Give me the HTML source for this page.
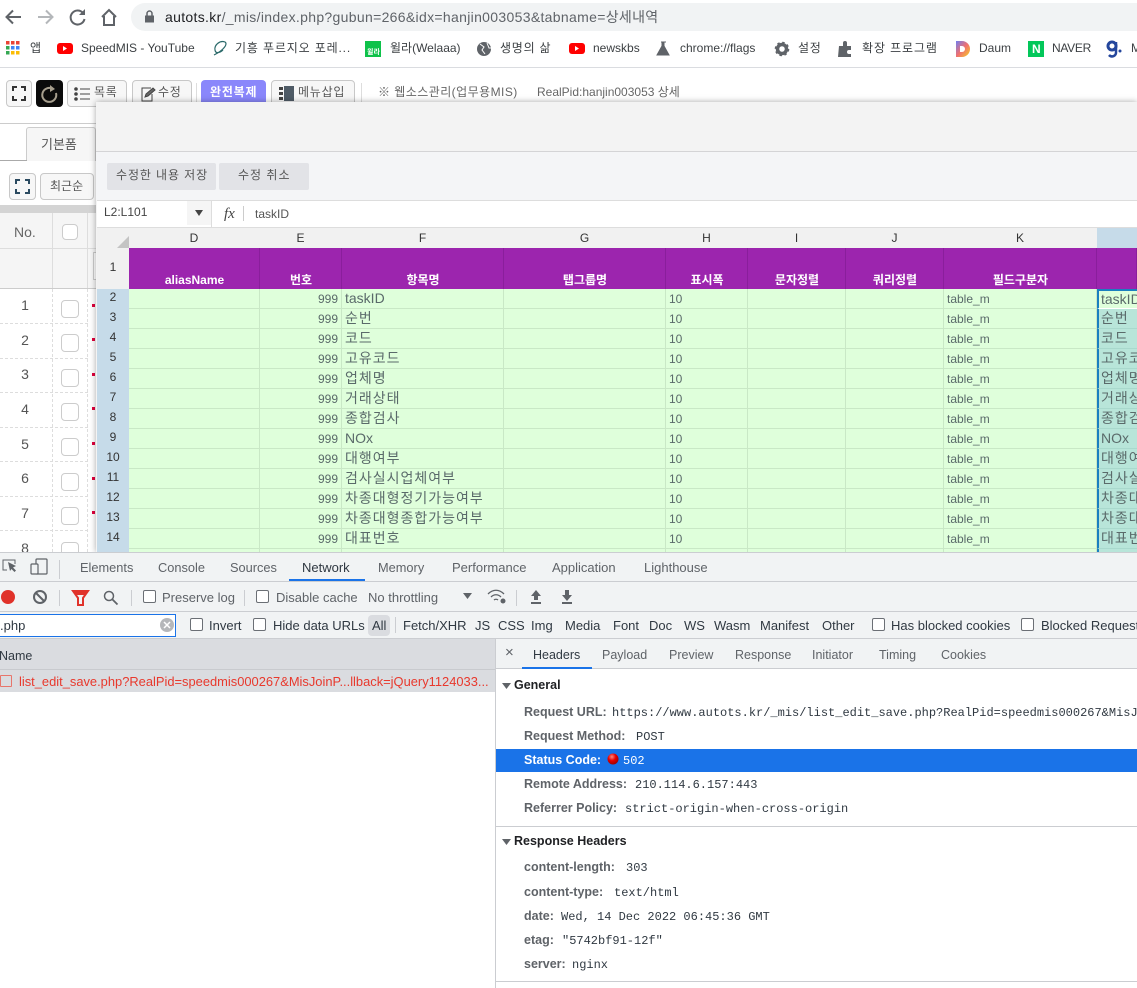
<!DOCTYPE html>
<html><head><meta charset="utf-8"><style>
*{box-sizing:border-box}
html,body{margin:0;padding:0;width:1137px;height:988px;overflow:hidden;background:#fff}
body{position:relative;font:12px "Liberation Sans","Noto Sans CJK KR",sans-serif;color:#333}
.a{position:absolute}
.t{position:absolute;white-space:nowrap;line-height:16px;height:16px}
.bm{font-size:12px;color:#3c4043;top:40px}
.ko{letter-spacing:.75px}
.tb{font-size:12px;color:#555;top:84px}
.btn{position:absolute;border:1px solid #c8c8c8;border-radius:4px;background:#f7f7f7}
svg{position:absolute;overflow:visible}
table{position:absolute;left:97px;top:228px;border-collapse:separate;border-spacing:0;table-layout:fixed;width:1040px}
td{padding:1px 0 0;overflow:hidden;white-space:nowrap;vertical-align:top;border-right:1px solid #c9e8c6;border-bottom:1px solid #c9e8c6;background:#dfffdb;color:#5a6a6a;font-size:12px;height:20px;line-height:18px}
tr.h td{height:20px;padding:0 1px 0 0;background:#f1f1f1;color:#333;text-align:center;border:0;line-height:20px}
tr.p td{height:41px;padding:0 0 0 1px;background:#9c25ae;border-right:1px solid #8a1e9c;border-bottom:0;color:#fff;font-weight:bold;text-align:center;vertical-align:bottom;line-height:17px}
td.r{padding:0;background:#c6dbe9;color:#333;text-align:center;border:0;line-height:17px}
tr.p td.r{padding:0 0 3px;background:#f1f1f1;color:#333;font-weight:normal;border:0;vertical-align:middle;line-height:20px}
td.n{text-align:right;padding-right:3px}
td.m{padding-left:3px}
td.k{padding:0 0 0 3px;font-size:14px;letter-spacing:1px;line-height:19px}
td.l{padding:0 0 0 2px;background:#b8e5d9;font-size:14px;letter-spacing:1px;line-height:19px;border:0;border-left:2px solid #1a7fc0;border-bottom:1px solid #a9d9cd}
.d{font-size:13px;color:#303942;top:0}
.cb{position:absolute;width:13px;height:13px;border:1px solid #6b6f75;border-radius:2px;background:#fff}
.cl{position:absolute;width:18px;height:18px;border:1px solid #ccc;border-radius:4px;background:#fff;left:61px}
.lab{font-weight:bold;font-size:12.5px;color:#5f6368}
.val{font:12px "Liberation Mono",monospace;color:#303942;line-height:16px}
.ln{position:absolute;background:#cbcdd1}
.num{left:0;width:50px;text-align:center;font-size:14px;color:#555}
.dot{position:absolute;left:92px;width:3px;height:3px;background:#e0003c}
</style></head><body>

<!-- Browser chrome -->
<div class="a" style="left:131px;top:3px;width:1006px;height:28px;border-radius:14px 0 0 14px;background:#f1f3f4"></div>
<svg style="left:0;top:0" width="125" height="32" fill="none">
<path d="M21 17H7M13 10.500L6.500 17l6.500 6.500" stroke="#5f6368" stroke-width="2"/>
<path d="M38 17h14M46 10.500l6.500 6.500-6.500 6.500" stroke="#b4b7ba" stroke-width="2"/>
<path d="M83 13a7 7 0 1 0 1.500 6" stroke="#5f6368" stroke-width="2"/><path d="M85 9v6h-6z" fill="#5f6368"/>
<path d="M102 17l7-7 7 7M104 16v9h10v-9" stroke="#5f6368" stroke-width="2"/>
<path d="M145 15.500h9v7h-9z" fill="#5f6368"/><path d="M147 15.500v-2a2.500 2.500 0 0 1 5 0v2" stroke="#5f6368" stroke-width="1.500"/>
</svg>
<div class="t" style="left:165px;top:9px;font-size:14px;color:#5f6368;letter-spacing:.32px"><span style="color:#202124">autots.kr</span>/_mis/index.php?gubun=266&amp;idx=hanjin003053&amp;tabname=상세내역</div>

<!-- Bookmarks -->
<svg style="left:0;top:36px" width="1137" height="28">
<g><rect x="6" y="5" width="3.500" height="3.500" fill="#ea4335"/><rect x="11" y="5" width="3.500" height="3.500" fill="#ea4335"/><rect x="16" y="5" width="3.500" height="3.500" fill="#ea4335"/><rect x="6" y="10" width="3.500" height="3.500" fill="#34a853"/><rect x="11" y="10" width="3.500" height="3.500" fill="#4285f4"/><rect x="16" y="10" width="3.500" height="3.500" fill="#4285f4"/><rect x="6" y="15" width="3.500" height="3.500" fill="#34a853"/><rect x="11" y="15" width="3.500" height="3.500" fill="#fbbc05"/><rect x="16" y="15" width="3.500" height="3.500" fill="#fbbc05"/></g>
<rect x="57" y="7" width="16" height="11" rx="3" fill="#f00"/><path d="M63 10l4 2.500-4 2.500z" fill="#fff"/>
<path d="M214 19C224 14 228 8 225 6c-5-2-11 3-10 8 .5 4 5 3 8 0" fill="none" stroke="#2b6a6a" stroke-width="1.200"/>
<rect x="365" y="5" width="16" height="16" fill="#0ec24a"/>
<circle cx="484" cy="13" r="7" fill="#5f6368"/><path d="M480 8l4 3-2 3 3 4M487 7l2 5 2 0" stroke="#fff" fill="none"/>
<rect x="569" y="7" width="16" height="11" rx="3" fill="#f00"/><path d="M575 10l4 2.500-4 2.500z" fill="#fff"/>
<path d="M661 6h5M662 6v4l-5 9h12l-5-9V6z" fill="#5f6368" stroke="#5f6368"/>
<circle cx="782" cy="13" r="4.500" fill="none" stroke="#5f6368" stroke-width="3.500"/><circle cx="782" cy="13" r="6.500" fill="none" stroke="#5f6368" stroke-width="1.600" stroke-dasharray="2.500 2.600"/>
<path d="M839 10h4v-3a2 2 0 0 1 4 0v3h4v4h-2a2 2 0 0 0 0 4h2v3h-13z" fill="#5f6368"/>
<defs><linearGradient id="dg" x1="0" y1="0" x2="1" y2="1"><stop offset="0" stop-color="#6f7ff0"/><stop offset=".5" stop-color="#f07070"/><stop offset="1" stop-color="#f5d020"/></linearGradient></defs>
<path d="M956 5h6a8 8 0 0 1 0 16h-6z" fill="url(#dg)"/><path d="M960 10h2a3 3 0 0 1 0 6h-2z" fill="#fff"/>
<rect x="1028" y="5" width="16" height="16" fill="#03c75a"/>
<circle cx="1112" cy="10" r="4" fill="none" stroke="#24469c" stroke-width="3"/><path d="M1116 6v10a4 4 0 0 1-7 3" fill="none" stroke="#24469c" stroke-width="2.500"/><circle cx="1120" cy="15" r="1.500" fill="#24469c"/>
</svg>
<div class="t" style="left:367px;top:45px;color:#fff;font-size:7px;font-weight:bold">윌라</div>
<div class="t" style="left:1032px;top:41px;color:#fff;font-size:12px;font-weight:bold">N</div>
<div class="t bm" style="left:30px">앱</div>
<div class="t bm" style="left:81px">SpeedMIS - YouTube</div>
<div class="t bm ko" style="left:235px;letter-spacing:.85px">기흥 푸르지오 포레...</div>
<div class="t bm" style="left:390px">윌라(Welaaa)</div>
<div class="t bm ko" style="left:500px">생명의 삶</div>
<div class="t bm" style="left:593px">newskbs</div>
<div class="t bm" style="left:680px">chrome://flags</div>
<div class="t bm ko" style="left:798px">설정</div>
<div class="t bm ko" style="left:862px;letter-spacing:.9px">확장 프로그램</div>
<div class="t bm" style="left:979px">Daum</div>
<div class="t bm" style="left:1052px;letter-spacing:-.3px">NAVER</div>
<div class="t bm" style="left:1131px">M</div>
<div class="a" style="left:0;top:67px;width:1137px;height:1px;background:#dadce0"></div>

<!-- Page toolbar -->
<div class="btn" style="left:6px;top:80px;width:26px;height:27px"></div>
<svg style="left:6px;top:80px" width="26" height="27" fill="none"><path d="M7 11V7h4M15 7h4v4M19 16v4h-4M11 20H7v-4" stroke="#333" stroke-width="2"/></svg>
<div class="a" style="left:36px;top:80px;width:27px;height:27px;background:#0b0b0b;border-radius:4px"></div>
<svg style="left:36px;top:80px" width="27" height="27" fill="none"><path d="M17 9a7 7 0 1 0 3 4" stroke="#a79f8e" stroke-width="2"/><path d="M14 5l5 4-5 3z" fill="#a79f8e"/></svg>
<div class="btn" style="left:67px;top:80px;width:60px;height:27px"></div>
<svg style="left:74px;top:86px" width="18" height="16"><g fill="#444"><circle cx="2" cy="3" r="1.800"/><circle cx="2" cy="8" r="1.800"/><circle cx="2" cy="13" r="1.800"/><rect x="6" y="2.500" width="10" height="1"/><rect x="6" y="7.500" width="10" height="1"/><rect x="6" y="12.500" width="10" height="1"/></g></svg>
<div class="t tb ko" style="left:94px">목록</div>
<div class="btn" style="left:132px;top:80px;width:60px;height:27px"></div>
<svg style="left:140px;top:86px" width="17" height="17" fill="none" stroke="#444"><path d="M11 2H2v13h10V8"/><path d="M5 11l1-3 7-6 2 2-7 6z" fill="#666"/></svg>
<div class="t tb ko" style="left:158px">수정</div>
<div class="a" style="left:196px;top:83px;width:1px;height:22px;background:#ddd"></div>
<div class="a" style="left:201px;top:80px;width:65px;height:27px;background:#8a87fb;border-radius:4px 4px 0 0"></div>
<div class="t" style="left:210px;top:84px;color:#fff;font-weight:bold;letter-spacing:.8px">완전복제</div>
<div class="btn" style="left:271px;top:80px;width:84px;height:27px"></div>
<svg style="left:279px;top:85px" width="18" height="18"><g fill="#444"><rect x="0" y="2" width="4" height="3"/><rect x="0" y="7" width="4" height="3"/><rect x="0" y="12" width="4" height="3"/><rect x="5" y="1" width="10" height="15" fill="#4f5b66"/></g></svg>
<div class="t tb ko" style="left:298px">메뉴삽입</div>
<div class="a" style="left:361px;top:83px;width:1px;height:22px;background:#ddd"></div>
<div class="t tb" style="left:378px;color:#666;letter-spacing:.45px">※ 웹소스관리(업무용MIS)</div>
<div class="t tb" style="left:537px;color:#666">RealPid:hanjin003053 상세</div>

<!-- Left page behind modal -->
<div class="a" style="left:0;top:123px;width:96px;height:1px;background:#ccc"></div>
<div class="a" style="left:26px;top:127px;width:70px;height:34px;background:#f6f6f6;border:1px solid #ccc;border-bottom:0;border-radius:3px 3px 0 0"></div>
<div class="t" style="left:41px;top:137px;font-size:13px;color:#555">기본폼</div>
<div class="a" style="left:0;top:160px;width:27px;height:1px;background:#aaa"></div>
<div class="btn" style="left:9px;top:173px;width:27px;height:27px"></div>
<svg style="left:9px;top:173px" width="27" height="27" fill="none"><path d="M7 11V7h4M16 7h4v4M20 16v4h-4M11 20H7v-4" stroke="#2b4a60" stroke-width="2"/></svg>
<div class="btn" style="left:40px;top:173px;width:54px;height:27px"></div>
<div class="t" style="left:50px;top:178px;color:#555">최근순</div>
<div class="a" style="left:0;top:205px;width:96px;height:8px;background:#d4d4d4"></div>
<div class="a" style="left:0;top:213px;width:96px;height:75px;background:#f5f5f5"></div>
<div class="a" style="left:0;top:248px;width:96px;height:1px;background:#ddd"></div>
<div class="a" style="left:0;top:288px;width:96px;height:1px;background:#ccc"></div>
<div class="a" style="left:52px;top:213px;width:1px;height:75px;background:#ddd"></div>
<div class="a" style="left:87px;top:213px;width:1px;height:75px;background:#ddd"></div>
<div class="t" style="left:14px;top:224px;font-size:14px;color:#666">No.</div>
<div class="cl" style="left:62px;top:224px;width:16px;height:16px"></div>
<div class="a" style="left:93px;top:252px;width:4px;height:28px;border:1px solid #ccc;background:#fff"></div>
<div class="a" style="left:0;top:289px;width:96px;height:263px;background:#fff"></div>
<div class="a" style="left:0;top:323px;width:88px;border-top:1px dashed #ddd"></div>
<div class="a" style="left:0;top:358px;width:88px;border-top:1px dashed #ddd"></div>
<div class="a" style="left:0;top:392px;width:88px;border-top:1px dashed #ddd"></div>
<div class="a" style="left:0;top:427px;width:88px;border-top:1px dashed #ddd"></div>
<div class="a" style="left:0;top:461px;width:88px;border-top:1px dashed #ddd"></div>
<div class="a" style="left:0;top:496px;width:88px;border-top:1px dashed #ddd"></div>
<div class="a" style="left:0;top:530px;width:88px;border-top:1px dashed #ddd"></div>
<div class="a" style="left:52px;top:289px;height:263px;border-left:1px dashed #ddd"></div>
<div class="a" style="left:87px;top:289px;height:263px;border-left:1px dashed #ddd"></div>
<div class="t num" style="top:297px">1</div><div class="cl" style="top:300px"></div><div class="dot" style="top:304px"></div>
<div class="t num" style="top:332px">2</div><div class="cl" style="top:334px"></div><div class="dot" style="top:338px"></div>
<div class="t num" style="top:366px">3</div><div class="cl" style="top:369px"></div><div class="dot" style="top:373px"></div>
<div class="t num" style="top:401px">4</div><div class="cl" style="top:403px"></div><div class="dot" style="top:407px"></div>
<div class="t num" style="top:436px">5</div><div class="cl" style="top:438px"></div><div class="dot" style="top:442px"></div>
<div class="t num" style="top:470px">6</div><div class="cl" style="top:473px"></div><div class="dot" style="top:477px"></div>
<div class="t num" style="top:505px">7</div><div class="cl" style="top:507px"></div><div class="dot" style="top:511px"></div>
<div class="t num" style="top:540px">8</div><div class="cl" style="top:542px"></div>

<!-- Modal -->
<div class="a" style="left:96px;top:102px;width:1041px;height:450px;background:#f3f3f3;box-shadow:0 0 6px rgba(0,0,0,.35)"></div>
<div class="a" style="left:96px;top:151px;width:1041px;height:1px;background:#d4d4d6"></div>
<div class="a" style="left:96px;top:152px;width:1041px;height:48px;background:#f4f5f7"></div>
<div class="a" style="left:107px;top:163px;width:109px;height:27px;background:#e2e3e7;border-radius:2px"></div>
<div class="t" style="left:116px;top:167px;color:#555;letter-spacing:.9px">수정한 내용 저장</div>
<div class="a" style="left:219px;top:163px;width:90px;height:27px;background:#e2e3e7;border-radius:2px"></div>
<div class="t" style="left:238px;top:167px;color:#555;letter-spacing:1px">수정 취소</div>
<div class="a" style="left:97px;top:200px;width:1040px;height:28px;background:#fff;border-top:1px solid #ddd;border-bottom:1px solid #ddd"></div>
<div class="t" style="left:104px;top:204px;color:#444">L2:L101</div>
<div class="a" style="left:187px;top:201px;width:24px;height:24px;background:#f5f5f5"></div>
<svg style="left:194px;top:209px" width="10" height="8"><path d="M1 1h8L5 7z" fill="#444"/></svg>
<div class="a" style="left:211px;top:201px;width:1px;height:26px;background:#ddd"></div>
<div class="t" style="left:224px;top:206px;font:italic 15px 'Liberation Serif',serif;color:#444">fx</div>
<div class="a" style="left:243px;top:206px;width:1px;height:15px;background:#ccc"></div>
<div class="t" style="left:255px;top:206px;color:#555">taskID</div>

<table>
<colgroup><col style="width:32px"><col style="width:131px"><col style="width:82px"><col style="width:162px"><col style="width:162px"><col style="width:82px"><col style="width:98px"><col style="width:98px"><col style="width:153px"><col style="width:40px"></colgroup>
<tr class="h"><td></td><td>D</td><td>E</td><td>F</td><td>G</td><td>H</td><td>I</td><td>J</td><td>K</td><td style="background:#c6dbe9"></td></tr>
<tr class="p"><td class="r">1</td><td>aliasName</td><td>번호</td><td>항목명</td><td>탭그룹명</td><td>표시폭</td><td>문자정렬</td><td>쿼리정렬</td><td>필드구분자</td><td></td></tr>
<tr><td class="r">2</td><td></td><td class="n">999</td><td class="k" style="letter-spacing:0">taskID</td><td></td><td class="m">10</td><td></td><td></td><td class="m">table_m</td><td class="l" style="background:#dfffdb;letter-spacing:0;border-top:2px solid #1a7fc0;border-bottom:1px solid #fff;line-height:17px">taskID</td></tr>
<tr><td class="r">3</td><td></td><td class="n">999</td><td class="k">순번</td><td></td><td class="m">10</td><td></td><td></td><td class="m">table_m</td><td class="l">순번</td></tr>
<tr><td class="r">4</td><td></td><td class="n">999</td><td class="k">코드</td><td></td><td class="m">10</td><td></td><td></td><td class="m">table_m</td><td class="l">코드</td></tr>
<tr><td class="r">5</td><td></td><td class="n">999</td><td class="k">고유코드</td><td></td><td class="m">10</td><td></td><td></td><td class="m">table_m</td><td class="l">고유코드</td></tr>
<tr><td class="r">6</td><td></td><td class="n">999</td><td class="k">업체명</td><td></td><td class="m">10</td><td></td><td></td><td class="m">table_m</td><td class="l">업체명</td></tr>
<tr><td class="r">7</td><td></td><td class="n">999</td><td class="k">거래상태</td><td></td><td class="m">10</td><td></td><td></td><td class="m">table_m</td><td class="l">거래상태</td></tr>
<tr><td class="r">8</td><td></td><td class="n">999</td><td class="k">종합검사</td><td></td><td class="m">10</td><td></td><td></td><td class="m">table_m</td><td class="l">종합검사</td></tr>
<tr><td class="r">9</td><td></td><td class="n">999</td><td class="k" style="letter-spacing:0">NOx</td><td></td><td class="m">10</td><td></td><td></td><td class="m">table_m</td><td class="l" style="letter-spacing:0">NOx</td></tr>
<tr><td class="r">10</td><td></td><td class="n">999</td><td class="k">대행여부</td><td></td><td class="m">10</td><td></td><td></td><td class="m">table_m</td><td class="l">대행여부</td></tr>
<tr><td class="r">11</td><td></td><td class="n">999</td><td class="k">검사실시업체여부</td><td></td><td class="m">10</td><td></td><td></td><td class="m">table_m</td><td class="l">검사실시</td></tr>
<tr><td class="r">12</td><td></td><td class="n">999</td><td class="k">차종대형정기가능여부</td><td></td><td class="m">10</td><td></td><td></td><td class="m">table_m</td><td class="l">차종대형</td></tr>
<tr><td class="r">13</td><td></td><td class="n">999</td><td class="k">차종대형종합가능여부</td><td></td><td class="m">10</td><td></td><td></td><td class="m">table_m</td><td class="l">차종대형</td></tr>
<tr><td class="r">14</td><td></td><td class="n">999</td><td class="k">대표번호</td><td></td><td class="m">10</td><td></td><td></td><td class="m">table_m</td><td class="l">대표번호</td></tr>
<tr><td class="r"></td><td></td><td></td><td></td><td></td><td></td><td></td><td></td><td></td><td class="l"></td></tr>
</table>
<svg style="left:117px;top:236px" width="12" height="12"><path d="M12 0v12H0z" fill="#c4c4c4"/></svg>

<!-- DevTools -->
<div class="a" style="left:0;top:552px;width:1137px;height:87px;background:#f1f3f4;border-top:1px solid #cbcdd1"></div>
<div class="ln" style="left:0;top:581px;width:1137px;height:1px"></div>
<div class="ln" style="left:0;top:611px;width:1137px;height:1px"></div>
<div class="ln" style="left:0;top:638px;width:1137px;height:1px"></div>
<svg style="left:0;top:552px" width="600" height="90" fill="none">
<path d="M7 18H3V8h12v4" stroke="#5f6368"/><path d="M8 10l8 4-3 1.500 3 3-1.500 1.500-3-3L10 19z" fill="#5f6368"/>
<rect x="36" y="7" width="11" height="15" rx="1" stroke="#5f6368" stroke-width="1.200"/><rect x="31" y="12" width="7" height="10" rx="1" fill="#f1f3f4" stroke="#5f6368" stroke-width="1.200"/>
<path d="M59.500 8v19" stroke="#cbcdd1"/>
<circle cx="8" cy="45" r="7" fill="#e0322a"/>
<circle cx="40" cy="45" r="6" stroke="#5f6368" stroke-width="2"/><path d="M36 41l8 8" stroke="#5f6368" stroke-width="2"/>
<path d="M59.500 38v16M131.500 38v16M244.500 38v16M516.500 38v16" stroke="#cbcdd1"/>
<path d="M73 39h15l-5 7v7h-5v-7z" stroke="#e0322a" stroke-width="2"/><path d="M74 40h13l-2 3H76z" fill="#e0322a"/>
<circle cx="109" cy="44" r="4.500" stroke="#5f6368" stroke-width="1.500"/><path d="M112.500 47.500l5 5" stroke="#5f6368" stroke-width="1.800"/>
<path d="M463 41h9l-4.500 6z" fill="#5f6368"/>
<path d="M488 42c5-5 11-5 16 0M491 45c3-3 7-3 10 0M494 48c1-1 3-1 4 0" stroke="#5f6368" stroke-width="1.300"/><circle cx="503" cy="49" r="2.500" fill="#5f6368"/>
<path d="M536 38l-5 6h3v4h4v-4h3zM531 50h10v2h-10z" fill="#5f6368"/>
<path d="M565 38h4v5h3l-5 6-5-6h3zM562 50h10v2h-10z" fill="#5f6368"/>
</svg>
<div class="a" style="left:289px;top:579px;width:76px;height:2px;background:#1a73e8"></div>
<div class="t d" style="left:80px;top:560px;color:#5f6368;font-size:12.800px">Elements</div>
<div class="t d" style="left:158px;top:560px;color:#5f6368;font-size:12.800px">Console</div>
<div class="t d" style="left:230px;top:560px;color:#5f6368;font-size:12.800px">Sources</div>
<div class="t d" style="left:302px;top:560px">Network</div>
<div class="t d" style="left:378px;top:560px;color:#5f6368;font-size:12.800px">Memory</div>
<div class="t d" style="left:452px;top:560px;color:#5f6368">Performance</div>
<div class="t d" style="left:552px;top:560px;color:#5f6368">Application</div>
<div class="t d" style="left:644px;top:560px;color:#5f6368">Lighthouse</div>
<div class="cb" style="left:143px;top:590px"></div>
<div class="t d" style="left:162px;top:590px;color:#5f6368">Preserve log</div>
<div class="cb" style="left:256px;top:590px"></div>
<div class="t d" style="left:276px;top:590px;color:#5f6368">Disable cache</div>
<div class="t d" style="left:368px;top:590px;color:#5f6368">No throttling</div>

<div class="a" style="left:-2px;top:614px;width:178px;height:23px;background:#fff;border:1px solid #1a73e8"></div>
<div class="t d" style="left:0;top:618px;font-size:13px">.php</div>
<svg style="left:160px;top:618px" width="15" height="15"><circle cx="7" cy="7" r="7" fill="#b5b7ba"/><path d="M4 4l6 6M10 4l-6 6" stroke="#fff" stroke-width="1.500"/></svg>
<div class="cb" style="left:190px;top:618px"></div>
<div class="t d" style="left:209px;top:618px">Invert</div>
<div class="cb" style="left:253px;top:618px"></div>
<div class="t d" style="left:273px;top:618px">Hide data URLs</div>
<div class="a" style="left:368px;top:615px;width:22px;height:21px;background:#dadce0;border-radius:4px"></div>
<div class="t d" style="left:372px;top:618px">All</div>
<div class="a" style="left:395px;top:617px;width:1px;height:16px;background:#cbcdd1"></div>
<div class="t d" style="left:403px;top:618px">Fetch/XHR</div>
<div class="t d" style="left:475px;top:618px">JS</div>
<div class="t d" style="left:498px;top:618px">CSS</div>
<div class="t d" style="left:531px;top:618px">Img</div>
<div class="t d" style="left:565px;top:618px">Media</div>
<div class="t d" style="left:613px;top:618px">Font</div>
<div class="t d" style="left:649px;top:618px">Doc</div>
<div class="t d" style="left:684px;top:618px">WS</div>
<div class="t d" style="left:714px;top:618px">Wasm</div>
<div class="t d" style="left:760px;top:618px">Manifest</div>
<div class="t d" style="left:822px;top:618px">Other</div>
<div class="cb" style="left:872px;top:618px"></div>
<div class="t d" style="left:891px;top:618px">Has blocked cookies</div>
<div class="cb" style="left:1021px;top:618px"></div>
<div class="t d" style="left:1041px;top:618px">Blocked Requests</div>

<!-- Network list -->
<div class="a" style="left:0;top:639px;width:495px;height:53px;background:#dadce0"></div>
<div class="a" style="left:0;top:669px;width:495px;height:1px;background:#c8cace"></div>
<div class="t" style="left:-1px;top:648px;font-size:12.500px;color:#303942">Name</div>
<div class="a" style="left:0;top:675px;width:12px;height:12px;border:1px solid #e8756b;border-radius:1px"></div>
<div class="t" style="left:19px;top:674px;font-size:12.900px;color:#e8392d">list_edit_save.php?RealPid=speedmis000267&amp;MisJoinP...llback=jQuery1124033...</div>
<div class="a" style="left:495px;top:639px;width:1px;height:349px;background:#cbcdd1"></div>

<!-- Details -->
<div class="a" style="left:496px;top:639px;width:641px;height:29px;background:#f1f3f4"></div>
<div class="ln" style="left:496px;top:668px;width:641px;height:1px"></div>
<div class="t" style="left:505px;top:645px;font-size:15px;color:#5f6368">×</div>
<div class="t d" style="left:533px;top:647px;font-size:12.500px">Headers</div>
<div class="a" style="left:522px;top:667px;width:70px;height:2px;background:#1a73e8"></div>
<div class="t d" style="left:602px;top:647px;font-size:12.500px;color:#5f6368">Payload</div>
<div class="t d" style="left:669px;top:647px;font-size:12.500px;color:#5f6368">Preview</div>
<div class="t d" style="left:735px;top:647px;font-size:12.500px;color:#5f6368">Response</div>
<div class="t d" style="left:812px;top:647px;font-size:12.500px;color:#5f6368">Initiator</div>
<div class="t d" style="left:879px;top:647px;font-size:12.500px;color:#5f6368">Timing</div>
<div class="t d" style="left:941px;top:647px;font-size:12.500px;color:#5f6368">Cookies</div>

<svg style="left:500px;top:680px" width="12" height="170"><path d="M2 3h9L6.500 9zM2 159h9l-4.500 6z" fill="#5f6368"/></svg>
<div class="t" style="left:514px;top:677px;font-weight:bold;font-size:12.500px;color:#202124">General</div>
<div class="t lab" style="left:524px;top:704px">Request URL:</div>
<div class="t val" style="left:612px;top:705px">https://www.autots.kr/_mis/list_edit_save.php?RealPid=speedmis000267&amp;MisJ</div>
<div class="t lab" style="left:524px;top:728px">Request Method:</div>
<div class="t val" style="left:636px;top:729px">POST</div>
<div class="a" style="left:496px;top:749px;width:641px;height:23px;background:#1a73e8"></div>
<div class="t lab" style="left:524px;top:752px;color:#fff">Status Code:</div>
<svg style="left:607px;top:753px" width="12" height="12"><defs><radialGradient id="rd" cx=".4" cy=".3" r=".7"><stop offset="0" stop-color="#ff8a80"/><stop offset=".5" stop-color="#e80000"/><stop offset="1" stop-color="#a00000"/></radialGradient></defs><circle cx="6" cy="6" r="5.500" fill="url(#rd)"/></svg>
<div class="t val" style="left:623px;top:753px;color:#fff">502</div>
<div class="t lab" style="left:524px;top:776px">Remote Address:</div>
<div class="t val" style="left:635px;top:777px">210.114.6.157:443</div>
<div class="t lab" style="left:524px;top:800px">Referrer Policy:</div>
<div class="t val" style="left:625px;top:801px">strict-origin-when-cross-origin</div>
<div class="ln" style="left:496px;top:826px;width:641px;height:1px"></div>
<div class="t" style="left:514px;top:833px;font-weight:bold;font-size:12.500px;color:#202124">Response Headers</div>
<div class="t lab" style="left:524px;top:859px">content-length:</div>
<div class="t val" style="left:626px;top:860px">303</div>
<div class="t lab" style="left:524px;top:884px">content-type:</div>
<div class="t val" style="left:614px;top:885px">text/html</div>
<div class="t lab" style="left:524px;top:908px">date:</div>
<div class="t val" style="left:561px;top:909px">Wed, 14 Dec 2022 06:45:36 GMT</div>
<div class="t lab" style="left:524px;top:932px">etag:</div>
<div class="t val" style="left:562px;top:933px">"5742bf91-12f"</div>
<div class="t lab" style="left:524px;top:956px">server:</div>
<div class="t val" style="left:572px;top:957px">nginx</div>
<div class="ln" style="left:496px;top:981px;width:641px;height:1px"></div>
</body></html>
